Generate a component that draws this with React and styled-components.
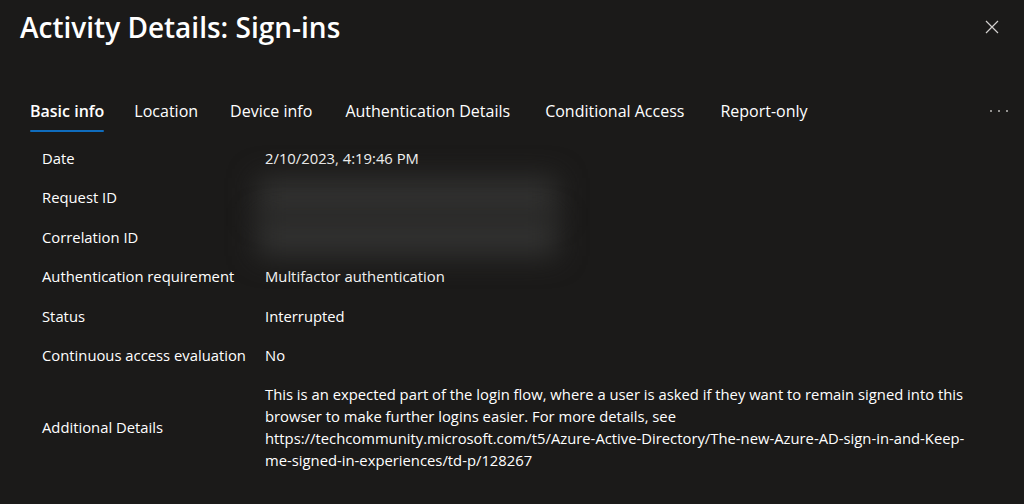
import React from "react";
import styled, { createGlobalStyle } from "styled-components";

const GlobalStyle = createGlobalStyle`
  html, body {
    margin: 0;
    padding: 0;
    background: #1b1a19;
  }
  body {
    font-family: "Segoe UI", "Open Sans", "Noto Sans", sans-serif;
    color: #f3f2f1;
  }
`;

const Panel = styled.div`
  width: 1024px;
  height: 504px;
  box-sizing: border-box;
  background: #1b1a19;
  overflow: hidden;
  display: flex;
  flex-direction: column;
`;

const Header = styled.div`
  display: flex;
  align-items: center;
  justify-content: space-between;
  padding: 7px 14px 0 20px;
  height: 40px;
`;

const Title = styled.h1`
  margin: 0;
  font-size: 28px;
  font-weight: 600;
  color: #ffffff;
`;

const CloseButton = styled.button`
  width: 36px;
  height: 36px;
  display: flex;
  align-items: center;
  justify-content: center;
  background: transparent;
  border: none;
  color: #d2d0ce;
  padding: 0;
  cursor: pointer;
`;

const TabBar = styled.div`
  display: flex;
  align-items: stretch;
  justify-content: space-between;
  margin-top: 45px;
  padding: 0 16px 0 14px;
  height: 42px;
`;

const TabList = styled.div`
  display: flex;
`;

const Tab = styled.div`
  position: relative;
  display: flex;
  align-items: center;
  padding: 0 ${(p) => p.pad[1]}px 4px ${(p) => p.pad[0]}px;
  font-size: 16px;
  font-weight: ${(p) => (p.active ? 600 : 400)};
  color: #ffffff;
  cursor: pointer;

  &::after {
    content: "";
    display: ${(p) => (p.active ? "block" : "none")};
    position: absolute;
    left: ${(p) => p.pad[0]}px;
    right: ${(p) => p.pad[1]}px;
    bottom: 2px;
    height: 2px;
    border-radius: 1px;
    background: #0f6cbd;
  }
`;

const More = styled.div`
  display: flex;
  align-items: center;
  gap: 6px;
  padding-bottom: 4px;
`;

const Dot = styled.span`
  width: 2px;
  height: 2px;
  border-radius: 50%;
  background: #bdbbb8;
`;

const Details = styled.div`
  display: flex;
  flex-direction: column;
  padding: 4px 34px 0 42px;
`;

const Row = styled.div`
  display: grid;
  grid-template-columns: 223px 1fr;
  align-items: center;
  min-height: 39.5px;
  padding: ${(p) => (p.tall ? "8px 0" : "0")};
  box-sizing: border-box;
  font-size: 14.8px;
`;

const Label = styled.div`
  color: #ffffff;
`;

const Value = styled.div`
  color: #ffffff;
  line-height: 22px;
`;

const Redacted = styled.div`
  width: 300px;
  height: 39px;
  margin-left: -8px;
  background: #323231;
  filter: blur(14px);
`;

const rows = [
  ["Date", "2/10/2023, 4:19:46 PM"],
  ["Request ID", null],
  ["Correlation ID", null],
  ["Authentication requirement", "Multifactor authentication"],
  ["Status", "Interrupted"],
  ["Continuous access evaluation", "No"],
];

const tabs = [
  ["Basic info", [16, 15]],
  ["Location", [15, 16]],
  ["Device info", [16, 16]],
  ["Authentication Details", [17, 17]],
  ["Conditional Access", [18, 18]],
  ["Report-only", [18, 18]],
];

export default function App() {
  return (
    <>
      <GlobalStyle />
      <Panel>
        <Header>
          <Title>Activity Details: Sign-ins</Title>
          <CloseButton aria-label="Close">
            <svg width="14" height="14" viewBox="0 0 14 14">
              <path
                d="M1 1L13 13M13 1L1 13"
                stroke="currentColor"
                strokeWidth="1.2"
                fill="none"
              />
            </svg>
          </CloseButton>
        </Header>
        <TabBar>
          <TabList>
            {tabs.map(([t, pad], i) => (
              <Tab key={t} active={i === 0} pad={pad}>
                {t}
              </Tab>
            ))}
          </TabList>
          <More>
            <Dot />
            <Dot />
            <Dot />
          </More>
        </TabBar>
        <Details>
          {rows.map(([label, value]) => (
            <Row key={label}>
              <Label>{label}</Label>
              {value ? <Value>{value}</Value> : <Redacted />}
            </Row>
          ))}
          <Row tall>
            <Label>Additional Details</Label>
            <Value>
              This is an expected part of the login flow, where a user is asked
              if they want to remain signed into this browser to make further
              logins easier. For more details, see
              https://techcommunity.microsoft.com/t5/Azure-Active-Directory/The-new-Azure-AD-sign-in-and-Keep-me-signed-in-experiences/td-p/128267
            </Value>
          </Row>
        </Details>
      </Panel>
    </>
  );
}
